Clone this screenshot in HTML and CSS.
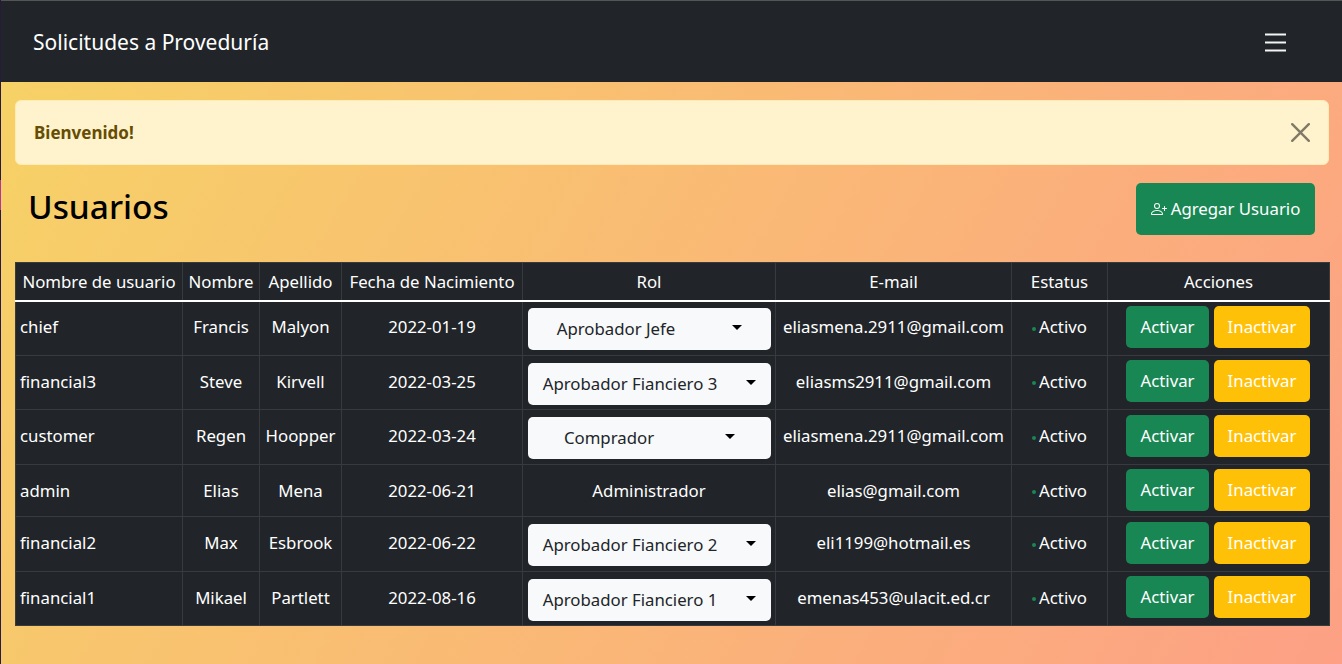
FILE: index.html
```html
<!DOCTYPE html>
<html lang="es">
<head>
<meta charset="utf-8">
<title>Solicitudes a Proveduría</title>
<link rel="stylesheet" href="styles.css">
</head>
<body>
<nav class="navbar">
  <a class="brand">Solicitudes a Proveduría</a>
  <button class="toggler" aria-label="Menu">
    <svg viewBox="0 0 30 30" width="30" height="30"><path d="M5 6.5h21M5 14.5h21M5 22.5h21" stroke="#fff" stroke-opacity=".95" stroke-width="2" fill="none"/></svg>
  </button>
</nav>
<main class="main">
  <div class="alert">
    <strong>Bienvenido!</strong>
    <button class="close" aria-label="Close">
      <svg viewBox="0 0 16 16" width="19" height="19"><path d="M.293.293a1 1 0 0 1 1.414 0L8 6.586 14.293.293a1 1 0 1 1 1.414 1.414L9.414 8l6.293 6.293a1 1 0 0 1-1.414 1.414L8 9.414l-6.293 6.293a1 1 0 0 1-1.414-1.414L6.586 8 .293 1.707a1 1 0 0 1 0-1.414z" fill="#000" fill-opacity=".5"/></svg>
    </button>
  </div>
  <div class="heading">
    <h1>Usuarios</h1>
    <button class="btn add">
      <svg viewBox="0 0 16 16" width="16" height="16" fill="currentColor"><path d="M6 8a3 3 0 1 0 0-6 3 3 0 0 0 0 6zm2-3a2 2 0 1 1-4 0 2 2 0 0 1 4 0zm4 8c0 1-1 1-1 1H1s-1 0-1-1 1-4 6-4 6 3 6 4zm-1-.004c-.001-.246-.154-.986-.832-1.664C9.516 10.68 8.289 10 6 10c-2.29 0-3.516.68-4.168 1.332-.678.678-.83 1.418-.832 1.664h10z"/><path d="M13.5 5a.5.5 0 0 1 .5.5V7h1.5a.5.5 0 0 1 0 1H14v1.5a.5.5 0 0 1-1 0V8h-1.5a.5.5 0 0 1 0-1H13V5.5a.5.5 0 0 1 .5-.5z"/></svg>
      Agregar Usuario
    </button>
  </div>
  <table class="users">
    <colgroup>
      <col class="c1"><col class="c2"><col class="c3"><col class="c4"><col class="c5"><col class="c6"><col class="c7"><col class="c8">
    </colgroup>
    <thead>
      <tr><th>Nombre de usuario</th><th>Nombre</th><th>Apellido</th><th>Fecha de Nacimiento</th><th>Rol</th><th>E-mail</th><th>Estatus</th><th>Acciones</th></tr>
    </thead>
    <tbody>
      <tr class="r1">
        <td class="user">chief</td><td>Francis</td><td>Malyon</td><td>2022-01-19</td>
        <td class="role"><button class="select gap-jefe"><span>Aprobador Jefe</span><i class="caret"></i></button></td>
        <td>eliasmena.2911@gmail.com</td>
        <td><span class="dot"></span>Activo</td>
        <td class="actions"><button class="btn on">Activar</button><button class="btn off">Inactivar</button></td>
      </tr>
      <tr class="r2">
        <td class="user">financial3</td><td>Steve</td><td>Kirvell</td><td>2022-03-25</td>
        <td class="role"><button class="select gap-fin"><span>Aprobador Fianciero 3</span><i class="caret"></i></button></td>
        <td>eliasms2911@gmail.com</td>
        <td><span class="dot"></span>Activo</td>
        <td class="actions"><button class="btn on">Activar</button><button class="btn off">Inactivar</button></td>
      </tr>
      <tr class="r3">
        <td class="user">customer</td><td>Regen</td><td>Hoopper</td><td>2022-03-24</td>
        <td class="role"><button class="select gap-comp"><span>Comprador</span><i class="caret"></i></button></td>
        <td>eliasmena.2911@gmail.com</td>
        <td><span class="dot"></span>Activo</td>
        <td class="actions"><button class="btn on">Activar</button><button class="btn off">Inactivar</button></td>
      </tr>
      <tr class="r4">
        <td class="user">admin</td><td>Elias</td><td>Mena</td><td>2022-06-21</td>
        <td>Administrador</td>
        <td>elias@gmail.com</td>
        <td><span class="dot"></span>Activo</td>
        <td class="actions"><button class="btn on">Activar</button><button class="btn off">Inactivar</button></td>
      </tr>
      <tr class="r5">
        <td class="user">financial2</td><td>Max</td><td>Esbrook</td><td>2022-06-22</td>
        <td class="role"><button class="select gap-fin"><span>Aprobador Fianciero 2</span><i class="caret"></i></button></td>
        <td>eli1199@hotmail.es</td>
        <td><span class="dot"></span>Activo</td>
        <td class="actions"><button class="btn on">Activar</button><button class="btn off">Inactivar</button></td>
      </tr>
      <tr class="r6">
        <td class="user">financial1</td><td>Mikael</td><td>Partlett</td><td>2022-08-16</td>
        <td class="role"><button class="select gap-fin"><span>Aprobador Fianciero 1</span><i class="caret"></i></button></td>
        <td>emenas453@ulacit.ed.cr</td>
        <td><span class="dot"></span>Activo</td>
        <td class="actions"><button class="btn on">Activar</button><button class="btn off">Inactivar</button></td>
      </tr>
    </tbody>
  </table>
</main>
</body>
</html>
```
FILE: styles.css
```css
* { box-sizing: border-box; }
html, body { height: 100%; }
body {
  margin: 0;
  height: 664px;
  overflow: hidden;
  position: relative;
  background: linear-gradient(120deg, #f6d365 0%, #fda085 100%);
  font-family: "Noto Sans", "Liberation Sans", sans-serif;
  font-size: 16.8px;
  line-height: 24px;
  color: #fff;
}
body::before {
  content: "";
  position: absolute;
  left: 0; top: 0; bottom: 0;
  width: 1px;
  background: linear-gradient(#2a1a3a 0 180px, #b5359d 180px 210px, #2a1a4a 210px);
  z-index: 2;
}
button { font: inherit; border: 0; cursor: pointer; }

.navbar {
  height: 82px;
  background: #212529;
  border-top: 1px solid #555;
  display: flex;
  align-items: center;
  justify-content: space-between;
  padding: 0 52px 0 33px;
}
.brand { font-size: 21px; color: #fff; }
.toggler { background: none; padding: 0; display: flex; margin-top: 2px; }

.main { padding: 18px 13px 0 15px; }

.alert {
  height: 65px;
  background: #fff3cd;
  border: 1px solid #ffecb5;
  border-radius: 6px;
  color: #664d03;
  display: flex;
  align-items: center;
  justify-content: space-between;
  padding: 0 18px;
}
.alert strong { font-size: 17px; font-weight: 700; }
.close { background: none; padding: 0; display: flex; }

.heading {
  display: flex;
  align-items: flex-start;
  justify-content: space-between;
  margin: 18px 14px 27px 13px;
  height: 52px;
}
h1 {
  margin: 0;
  font-size: 33.4px;
  line-height: 46px;
  font-weight: 500;
  color: #000;
}

.btn {
  color: #fff;
  border-radius: 5px;
  display: inline-flex;
  align-items: center;
  justify-content: center;
  height: 42px;
}
.add {
  background: #198754;
  height: 52px;
  width: 179px;
  gap: 4px;
  padding: 0;
}
.on { background: #198754; width: 83px; }
.off { background: #ffc107; width: 96px; }

.users {
  width: 1314px;
  table-layout: fixed;
  border-collapse: collapse;
  background: #212529;
  text-align: center;
}
.c1 { width: 167px; }
.c2 { width: 77px; }
.c3 { width: 82px; }
.c4 { width: 181px; }
.c5 { width: 253px; }
.c6 { width: 236px; }
.c7 { width: 96px; }
.c8 { width: 222px; }

.users th, .users td {
  border: 1px solid #373b3e;
  padding: 0;
  font-weight: 400;
  white-space: nowrap;
  overflow: hidden;
}
.users thead tr { height: 38px; }
.users thead th { border-bottom: 2px solid #fff; padding-top: 1px; }
.r1 { height: 55px; }
.r2 { height: 54px; }
.r3 { height: 55px; }
.r4 { height: 52px; }
.r5 { height: 55px; }
.r6 { height: 54px; }

.users td { padding-bottom: 2px; }
.users .r4 td { padding-bottom: 0; }
.users td.user { text-align: left; padding-left: 4px; }
.users td.role { padding: 2px 4px 0 5px; }
.users td.actions { padding: 0 0 3px 18px; text-align: left; }
.users .r4 td.actions { padding-bottom: 1px; }
.users td.actions .btn { vertical-align: top; }
.users td.actions .btn + .btn { margin-left: 5px; }

.select {
  width: 243px;
  height: 42px;
  background: #f8f9fa;
  color: #212529;
  border-radius: 5px;
  display: flex;
  align-items: center;
  justify-content: center;
  padding: 0;
}
.gap-jefe { gap: 57px; }
.gap-fin { gap: 29px; }
.gap-comp { gap: 71px; }
.caret {
  width: 0;
  height: 0;
  border-left: 5.5px solid transparent;
  border-right: 5.5px solid transparent;
  border-top: 5.5px solid #000;
  margin-top: -3px;
}
.dot {
  display: inline-block;
  width: 4px;
  height: 4px;
  border-radius: 50%;
  background: #198754;
  margin-right: 3px;
  vertical-align: middle;
}
```
